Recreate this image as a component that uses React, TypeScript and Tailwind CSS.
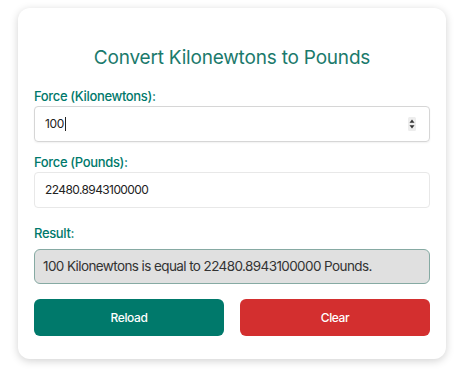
import { useState } from "react"

export default function App() {
  const [kn, setKn] = useState("100")
  const [lb, setLb] = useState("22480.8943100000")

  const clear = () => {
    setKn("")
    setLb("")
  }

  return (
    <div className="min-h-[375px] bg-white px-[18px] pt-[8px]" style={{ fontFamily: "Inter, 'Noto Sans', sans-serif" }}>
      <div className="w-[428px] rounded-xl bg-white px-[16px] pt-[38px] pb-[23px] shadow-[0_2px_8px_rgba(0,0,0,0.18)]">
        <h2 className="mb-[16px] text-center text-[19px] leading-[24px] font-normal tracking-[-0.2px] text-[#1b7a6c]">
          Convert Kilonewtons to Pounds
        </h2>

        <label className="block text-[13px] leading-[20px] font-medium tracking-[-0.35px] text-[#00796b]">
          Force (Kilonewtons):
        </label>
        <div className="flex h-[36px] w-full items-center rounded border border-[#d6d6d6] px-[10px] text-[12px] tracking-[-0.4px] text-[#222] shadow-[0_1px_2px_rgba(0,0,0,0.06)]">
          <span>{kn}</span>
          <span className="ml-[1px] h-[14px] w-[1px] bg-[#222]" />
          <svg className="ml-auto mr-[3px]" width="8" height="14" viewBox="0 0 8 14">
            <rect x="0" y="0" width="8" height="14" rx="1.5" fill="#ededed" />
            <path d="M4 2.5 L6.5 5.8 H1.5 Z" fill="#333" />
            <path d="M4 11.5 L6.5 8.2 H1.5 Z" fill="#333" />
          </svg>
        </div>

        <label className="mt-[10px] block text-[13px] leading-[20px] font-medium tracking-[-0.35px] text-[#00796b]">
          Force (Pounds):
        </label>
        <div className="flex h-[36px] w-full items-center rounded border border-[#e8e8e8] px-[10px] text-[12px] tracking-[-0.6px] text-[#222]">
          {lb}
        </div>

        <label className="mt-[15px] block text-[13px] leading-[20px] font-medium tracking-[-0.35px] text-[#00796b]">
          Result:
        </label>
        <div className="mt-[6px] flex h-[35px] items-center whitespace-nowrap rounded-md border border-[#86aaa3] bg-[#e0e0e0] px-[8px] text-[13.5px] tracking-[-0.6px] text-[#333]">
          {kn} Kilonewtons is equal to {lb} Pounds.
        </div>

        <div className="mt-[15px] grid grid-cols-2 gap-[16px]">
          <button className="h-[37px] rounded-md bg-[#00796b] text-[12px] font-medium tracking-[-0.4px] text-white">
            Reload
          </button>
          <button
            className="h-[37px] rounded-md bg-[#d32f2f] text-[12px] font-medium tracking-[-0.4px] text-white"
            onClick={clear}
          >
            Clear
          </button>
        </div>
      </div>
    </div>
  )
}
